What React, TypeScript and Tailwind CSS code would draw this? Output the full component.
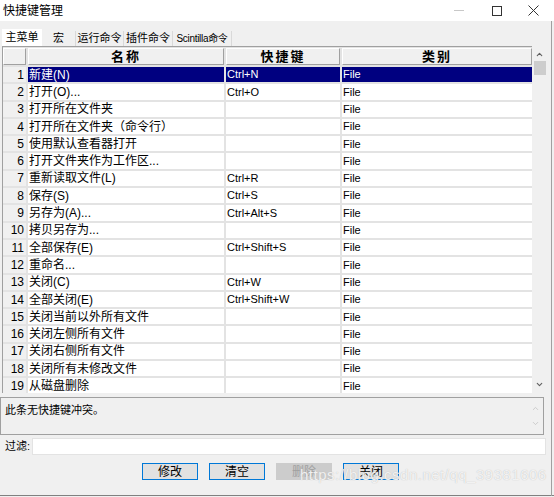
import { ChevronDown, ChevronUp } from "lucide-react";

interface ShortcutRow {
  name: string;
  keys: string;
  category: string;
}

const rows: ShortcutRow[] = [
  { name: "新建(N)", keys: "Ctrl+N", category: "File" },
  { name: "打开(O)...", keys: "Ctrl+O", category: "File" },
  { name: "打开所在文件夹", keys: "", category: "File" },
  { name: "打开所在文件夹（命令行）", keys: "", category: "File" },
  { name: "使用默认查看器打开", keys: "", category: "File" },
  { name: "打开文件夹作为工作区...", keys: "", category: "File" },
  { name: "重新读取文件(L)", keys: "Ctrl+R", category: "File" },
  { name: "保存(S)", keys: "Ctrl+S", category: "File" },
  { name: "另存为(A)...", keys: "Ctrl+Alt+S", category: "File" },
  { name: "拷贝另存为...", keys: "", category: "File" },
  { name: "全部保存(E)", keys: "Ctrl+Shift+S", category: "File" },
  { name: "重命名...", keys: "", category: "File" },
  { name: "关闭(C)", keys: "Ctrl+W", category: "File" },
  { name: "全部关闭(E)", keys: "Ctrl+Shift+W", category: "File" },
  { name: "关闭当前以外所有文件", keys: "", category: "File" },
  { name: "关闭左侧所有文件", keys: "", category: "File" },
  { name: "关闭右侧所有文件", keys: "", category: "File" },
  { name: "关闭所有未修改文件", keys: "", category: "File" },
  { name: "从磁盘删除", keys: "", category: "File" },
];

const tabs = ["主菜单", "宏", "运行命令", "插件命令", "Scintilla命令"];
const tabWidths = ["w-[40px]", "w-[34px]", "w-[48px]", "w-[49px]", "w-[59px]"];

const font = "font-['Liberation_Sans','Noto_Sans_CJK_SC',sans-serif]";

function HeaderCell({ label }: { label: string }) {
  return (
    <div className="flex h-[17px] items-center justify-center border-t border-l border-white border-b border-r border-b-[#a0a0a0] border-r-[#a0a0a0] bg-[#f0f0f0] text-[13px] font-bold tracking-[2px] text-black">
      {label}
    </div>
  );
}

function Button({ label, disabled }: { label: string; disabled?: boolean }) {
  return (
    <button
      className={
        disabled
          ? "h-[17px] w-[56px] bg-[#cccccc] text-[12px] leading-none text-[#a0a0a0]"
          : "h-[17px] w-[56px] border border-[#0078d7] bg-[#e1e1e1] text-[12px] leading-none text-black"
      }
    >
      {label}
    </button>
  );
}

export default function App() {
  return (
    <div className={`relative flex h-[497px] w-[554px] flex-col overflow-hidden bg-[#f0f0f0] ${font}`}>
      {/* title bar */}
      <div className="flex h-[21px] items-center justify-between bg-white pl-[3px]">
        <span className="text-[12px] text-black">快捷键管理</span>
        <div className="flex h-full items-center">
          <div className="flex w-[38px] justify-center">
            <span className="block h-px w-[10px] bg-[#c8c8c8]" />
          </div>
          <div className="flex w-[38px] justify-center">
            <span className="block h-[10px] w-[10px] border border-[#333]" />
          </div>
          <div className="flex w-[38px] justify-center pr-[4px]">
            <svg width="11" height="11" viewBox="0 0 11 11">
              <path d="M0.5 0.5 L10.5 10.5 M10.5 0.5 L0.5 10.5" stroke="#333" strokeWidth="1" />
            </svg>
          </div>
        </div>
      </div>

      {/* tabs */}
      <div className="mt-[8px] flex h-[17px] items-end pl-[2px]">
        {tabs.map((tab, i) => (
          <div
            key={tab}
            className={
              i === 0
                ? `flex h-[17px] ${tabWidths[i]} items-center justify-center whitespace-nowrap bg-white text-[11px] text-black`
                : `flex h-[15px] ${tabWidths[i]} items-center justify-center whitespace-nowrap border-r border-[#d9d9d9] text-black ${i === 4 ? "text-[10px] tracking-[-0.3px]" : "text-[11px]"}`
            }
          >
            {tab}
          </div>
        ))}
      </div>

      {/* grid + scrollbar */}
      <div className="flex h-[347px] pl-[2px]">
        <div className="grid h-full w-[530px] grid-cols-[23px_196px_114px_190px] auto-rows-min gap-[2px] overflow-hidden border-t border-l border-[#a0a0a0] bg-[#e3e3e3] pt-px">
          <HeaderCell label="" />
          <HeaderCell label="名称" />
          <HeaderCell label="快捷键" />
          <HeaderCell label="类别" />
          {rows.map((row, i) => {
            const selected = i === 0;
            const cell = selected ? "bg-[#000080] text-white" : "bg-white text-black";
            return [
              <div
                key={`n${i}`}
                className="flex h-[15.3px] items-center justify-end bg-[#f0f0f0] pr-[2px] text-[12px] text-black"
              >
                {i + 1}
              </div>,
              <div key={`a${i}`} className={`flex h-[15.3px] items-center pl-[1px] text-[12px] ${cell}`}>
                {row.name}
              </div>,
              <div key={`b${i}`} className={`flex h-[15.3px] items-center pl-[1px] text-[11px] ${cell}`}>
                {row.keys}
              </div>,
              <div key={`c${i}`} className={`flex h-[15.3px] items-center pl-[1px] text-[11px] ${cell}`}>
                {row.category}
              </div>,
            ];
          })}
        </div>
        <div className="ml-[1px] flex h-full w-[13px] flex-col items-center bg-[#f0f0f0]">
          <ChevronUp className="mt-[4px] h-[9px] w-[9px] text-[#606060]" strokeWidth={3} />
          <div className="mt-[2px] h-[14px] w-[12px] bg-[#cdcdcd]" />
          <div className="flex-1" />
          <ChevronDown className="mb-[4px] h-[9px] w-[9px] text-[#606060]" strokeWidth={3} />
        </div>
      </div>

      {/* conflict message */}
      <div className="mt-[4px] flex h-[38px] w-[544px] border border-[#a0a0a0] bg-[#f0f0f0]">
        <div className="flex-1 pl-[4px] pt-[4px] text-[11px] text-black">此条无快捷键冲突。</div>
        <div className="flex w-[16px] flex-col items-center justify-between py-[6px]">
          <ChevronUp className="h-[9px] w-[9px] text-[#c0c0c0]" strokeWidth={2} />
          <ChevronDown className="h-[9px] w-[9px] text-[#c0c0c0]" strokeWidth={2} />
        </div>
      </div>

      {/* filter */}
      <div className="mt-[2px] flex h-[18px] items-center pl-[5px]">
        <span className="w-[27px] text-[11px] text-black">过滤:</span>
        <div className="h-[17px] w-[514px] border border-[#e3e3e3] bg-white" />
      </div>

      {/* buttons */}
      <div className="mt-[8px] flex gap-[11px] pl-[142px]">
        <Button label="修改" />
        <Button label="清空" />
        <Button label="删除" disabled />
        <Button label="关闭" />
      </div>

      {/* window edges */}
      <div className="absolute bottom-[1px] left-0 h-px w-full bg-[#808080]" />
      <div className="absolute top-[21px] right-[2px] bottom-[1px] w-px bg-[#a0a0a0]" />

      {/* watermark */}
      <span className="pointer-events-none absolute top-[464px] left-[300px] text-[15px] tracking-[0.5px] text-white/80 [text-shadow:0_0_1px_#b0b0b0]">
        https://blog.csdn.net/qq_39381606
      </span>
    </div>
  );
}
